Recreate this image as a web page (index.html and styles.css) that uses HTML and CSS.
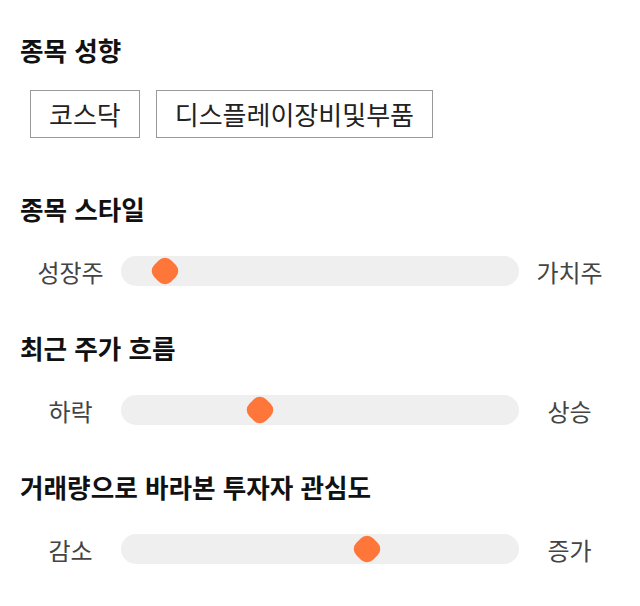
FILE: index.html
```html
<!DOCTYPE html>
<html lang="ko">
<head>
  <meta charset="UTF-8">
  <meta name="viewport" content="width=device-width, initial-scale=1.0">
  <title>종목 성향</title>
  <link rel="stylesheet" href="styles.css">
</head>
<body>
  <div class="section">
    <h2 class="section-title">종목 성향</h2>
    <div class="tags">
      <span class="tag">코스닥</span>
      <span class="tag">디스플레이장비및부품</span>
    </div>
  </div>

  <div class="section section-first">
    <h2 class="section-title">종목 스타일</h2>
    <div class="slider-row">
      <span class="slider-label">성장주</span>
      <div class="track">
        <div class="thumb" style="left: 11%;"></div>
      </div>
      <span class="slider-label">가치주</span>
    </div>
  </div>

  <div class="section">
    <h2 class="section-title">최근 주가 흐름</h2>
    <div class="slider-row">
      <span class="slider-label">하락</span>
      <div class="track">
        <div class="thumb" style="left: 34.8%;"></div>
      </div>
      <span class="slider-label">상승</span>
    </div>
  </div>

  <div class="section">
    <h2 class="section-title">거래량으로 바라본 투자자 관심도</h2>
    <div class="slider-row">
      <span class="slider-label">감소</span>
      <div class="track">
        <div class="thumb" style="left: 61.7%;"></div>
      </div>
      <span class="slider-label">증가</span>
    </div>
  </div>
</body>
</html>
```

FILE: styles.css
```css
body {
  font-family: "Noto Sans CJK KR", "Noto Sans", sans-serif;
  color: #222;
  background-color: #fff;
  margin: 0;
  padding: 34px 20px 20px;
}

.section {
  margin-bottom: 46px;
}

.section-first {
  margin-top: 55px;
}

.section:first-child {
  margin-bottom: 0;
}

.section-title {
  font-size: 25.6px;
  font-weight: 700;
  line-height: 32px;
  color: #111;
  margin: 0;
}

.tags {
  display: flex;
  gap: 16px;
  margin-top: 24px;
  padding-left: 10px;
}

.tag {
  display: block;
  border: 1px solid #999;
  padding: 0 18px;
  height: 46px;
  line-height: 46px;
  font-size: 26px;
  color: #222;
}

.slider-row {
  display: flex;
  align-items: center;
  margin-top: 31px;
  height: 30px;
}

.slider-label {
  width: 101px;
  flex: none;
  text-align: center;
  font-size: 24px;
  color: #444;
}

.track {
  position: relative;
  flex: 1;
  height: 30px;
  border-radius: 15px;
  background-color: #efefef;
}

.thumb {
  position: absolute;
  top: 50%;
  width: 24px;
  height: 24px;
  border-radius: 9px;
  background-color: #ff763b;
  transform: translate(-50%, -50%) rotate(45deg);
}
```
